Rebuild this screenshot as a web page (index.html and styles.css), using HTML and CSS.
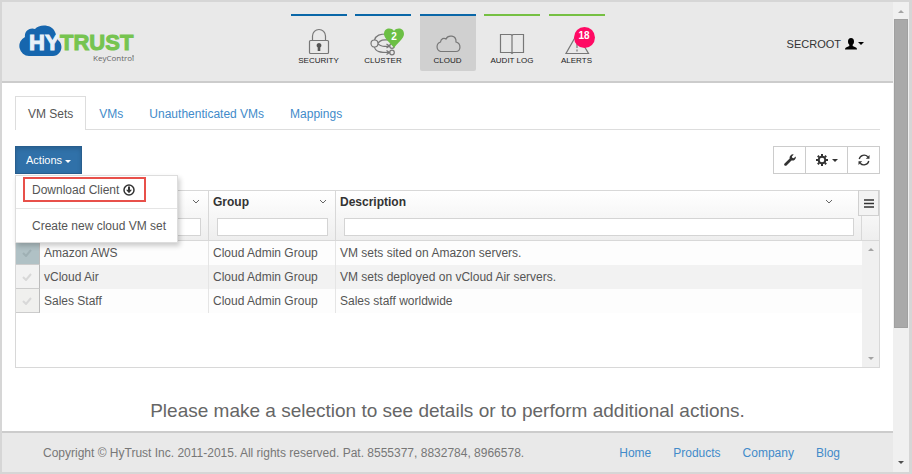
FILE: index.html
```html
<!DOCTYPE html>
<html lang="en">
<head>
    <meta charset="UTF-8">
    <meta name="viewport" content="width=device-width, initial-scale=1.0">
    <title>HyTrust KeyControl</title>
    <link rel="stylesheet" href="styles.css">
</head>
<body>
    <div class="window">
        <div class="page">
            <header class="header">
                <a href="#" class="logo" aria-label="HyTrust KeyControl">
                    <svg width="120" height="42" viewBox="0 0 120 42">
                        <path d="M10 32a10 10 0 0 1-4-19C5 7 11 3 16 5C20 0 33 0 36 8C38 12 37 14 40 17C45 22 42 32 34 32Z" fill="#1666ae"/>
                        <text class="logo-hy" x="10" y="26">HY</text>
                        <text class="logo-trust" x="41" y="26">TRUST</text>
                        <text class="logo-sub" x="74" y="37">KeyControl</text>
                        <circle cx="114" cy="32" r="1" fill="#999"/>
                    </svg>
                </a>

                <nav class="main-nav">
                    <a href="#" class="nav-item">
                        <svg class="nav-icon" width="32" height="28" viewBox="0 0 32 28">
                            <rect x="6.500" y="12.500" width="19" height="13" rx="1"/>
                            <path d="M9.500 12V8a6.500 6.500 0 0 1 13 0v4"/>
                            <path class="solid" d="M16 15a2.500 2.500 0 0 1 1.300 4.600V23h-2.600v-3.400A2.500 2.500 0 0 1 16 15z"/>
                        </svg>
                        <span>SECURITY</span>
                    </a>
                    <a href="#" class="nav-item">
                        <svg class="nav-icon" width="32" height="28" viewBox="0 0 32 28">
                            <circle cx="7.500" cy="15.500" r="3.500"/>
                            <circle cx="25" cy="18" r="2.300"/>
                            <circle cx="25" cy="24.500" r="2.300"/>
                            <path d="M7.500 12C9 7 13 6 20 6M11 15C15 11 17 12 22 12M11 16c4 3 6 2.500 11 2M7.500 19c1 5 6 5.500 14.500 5.500M19.500 16l3 2-3 2M19.500 22.500l3 2-3 2"/>
                        </svg>
                        <span>CLUSTER</span>
                        <svg class="badge badge-heart" width="22" height="20" viewBox="0 0 22 20">
                            <path d="M11 20C8 15 1 11 1 6C1 0 8-1 11 3C14-1 21 0 21 6C21 11 14 15 11 20Z" fill="#6cbf45"/>
                            <text x="11" y="12" text-anchor="middle">2</text>
                        </svg>
                    </a>
                    <a href="#" class="nav-item active">
                        <svg class="nav-icon" width="32" height="28" viewBox="0 0 32 28">
                            <path d="M8.500 23.500A5 5 0 0 1 8.500 14C9 10.500 12 9.500 14 11C16 6.500 24.500 7 24 14C29.500 15.500 29 23.500 24 23.500Z"/>
                        </svg>
                        <span>CLOUD</span>
                    </a>
                    <a href="#" class="nav-item green">
                        <svg class="nav-icon" width="32" height="28" viewBox="0 0 32 28">
                            <path d="M4.500 6.500H15l1 1 1-1h10.500v18H17l-1 1-1-1H4.500zM16 7.500v18"/>
                        </svg>
                        <span>AUDIT LOG</span>
                    </a>
                    <a href="#" class="nav-item green">
                        <svg class="nav-icon" width="32" height="28" viewBox="0 0 32 28">
                            <path d="M16 6L5 25.500h22.500zM16 15v5M16 21.500v2"/>
                        </svg>
                        <span>ALERTS</span>
                        <span class="badge badge-count">18</span>
                    </a>
                </nav>

                <button type="button" class="user-menu">
                    SECROOT
                    <svg width="12" height="12" viewBox="0 0 12 12">
                        <path d="M6 0C8 0 9 1.500 9 3.500C9 5 8.500 6 7.700 6.700V8L11 9.500Q12 10 12 11.500H0Q0 10 1 9.500L4.300 8V6.700C3.500 6 3 5 3 3.500C3 1.500 4 0 6 0Z"/>
                    </svg>
                    <span class="caret"></span>
                </button>
            </header>

            <main class="content">
                <nav class="tabs">
                    <a href="#" class="tab active">VM Sets</a>
                    <a href="#" class="tab">VMs</a>
                    <a href="#" class="tab">Unauthenticated VMs</a>
                    <a href="#" class="tab">Mappings</a>
                </nav>

                <div class="toolbar">
                    <div class="dropdown">
                        <button type="button" class="btn-actions">Actions <span class="caret"></span></button>
                        <div class="dropdown-menu">
                            <a href="#" class="highlight">Download Client
                                <svg width="12" height="12" viewBox="0 0 12 12">
                                    <circle cx="6" cy="6" r="5" fill="none" stroke="#333" stroke-width="1.500"/>
                                    <path d="M5 2.500h2v3.200h2L6 9.200 3 5.700h2z" fill="#333"/>
                                </svg>
                            </a>
                            <a href="#">Create new cloud VM set</a>
                        </div>
                    </div>
                    <div class="btn-group">
                        <button type="button" aria-label="Tools">
                            <svg width="12" height="12" viewBox="0 0 12 12">
                                <path d="M11.800 2.500L9.600 4.200 8.200 3.800 7.900 2.400 9.700.4A3.400 3.400 0 0 0 5.700 4.600L.6 9.500a1.300 1.300 0 0 0 1.900 1.900L7.500 6.400A3.400 3.400 0 0 0 11.800 2.500z" fill="#333"/>
                            </svg>
                        </button>
                        <button type="button" aria-label="Settings">
                            <svg width="12" height="12" viewBox="0 0 12 12">
                                <circle cx="6" cy="6" r="3.300" fill="none" stroke="#333" stroke-width="2"/>
                                <path d="M6 0v2M6 10v2M0 6h2M10 6h2M1.800 1.800l1.400 1.400M8.800 8.800l1.400 1.400M1.800 10.200l1.400-1.400M8.800 3.200l1.400-1.400" stroke="#333" stroke-width="2"/>
                            </svg>
                            <span class="caret"></span>
                        </button>
                        <button type="button" aria-label="Refresh">
                            <svg width="12" height="12" viewBox="0 0 12 12">
                                <path d="M1.200 5A5 5 0 0 1 9.800 2.800M10.800 7A5 5 0 0 1 2.200 9.200" fill="none" stroke="#333" stroke-width="1.300"/>
                                <path d="M11.500 1v3.700H7.800zM.5 11V7.300h3.700z" fill="#333"/>
                            </svg>
                        </button>
                    </div>
                </div>

                <div class="grid">
                    <table class="grid-table">
                        <thead>
                            <tr>
                                <th class="col-check"></th>
                                <th class="col-name">
                                    <div class="th-label">Name <svg class="chevron" width="8" height="6" viewBox="0 0 8 6"><path d="M1 1l3 3 3-3"/></svg></div>
                                    <input type="text" aria-label="Filter by name">
                                </th>
                                <th class="col-group">
                                    <div class="th-label">Group <svg class="chevron" width="8" height="6" viewBox="0 0 8 6"><path d="M1 1l3 3 3-3"/></svg></div>
                                    <input type="text" aria-label="Filter by group">
                                </th>
                                <th class="col-description">
                                    <div class="th-label">Description <svg class="chevron" width="8" height="6" viewBox="0 0 8 6"><path d="M1 1l3 3 3-3"/></svg></div>
                                    <input type="text" aria-label="Filter by description">
                                </th>
                            </tr>
                        </thead>
                        <tbody>
                            <tr>
                                <td class="check current"><svg width="10" height="8" viewBox="0 0 10 8"><path d="M1 4l3 3 5-6"/></svg></td>
                                <td>Amazon AWS</td>
                                <td>Cloud Admin Group</td>
                                <td>VM sets sited on Amazon servers.</td>
                            </tr>
                            <tr>
                                <td class="check"><svg width="10" height="8" viewBox="0 0 10 8"><path d="M1 4l3 3 5-6"/></svg></td>
                                <td>vCloud Air</td>
                                <td>Cloud Admin Group</td>
                                <td>VM sets deployed on vCloud Air servers.</td>
                            </tr>
                            <tr>
                                <td class="check"><svg width="10" height="8" viewBox="0 0 10 8"><path d="M1 4l3 3 5-6"/></svg></td>
                                <td>Sales Staff</td>
                                <td>Cloud Admin Group</td>
                                <td>Sales staff worldwide</td>
                            </tr>
                        </tbody>
                    </table>
                    <div class="grid-side">
                        <div class="grid-corner">
                            <button type="button" class="grid-menu" aria-label="Columns">
                                <svg width="10" height="9" viewBox="0 0 10 9"><path d="M0 1h10M0 4.500h10M0 8h10" stroke="#333" stroke-width="1.500"/></svg>
                            </button>
                        </div>
                        <div class="grid-scroll">
                            <span class="arrow-up"></span>
                            <span class="arrow-down"></span>
                        </div>
                    </div>
                </div>

                <p class="message">Please make a selection to see details or to perform additional actions.</p>
            </main>

            <footer class="footer">
                <span>Copyright © HyTrust Inc. 2011-2015. All rights reserved. Pat. 8555377, 8832784, 8966578.</span>
                <nav class="footer-links">
                    <a href="#">Home</a>
                    <a href="#">Products</a>
                    <a href="#">Company</a>
                    <a href="#">Blog</a>
                </nav>
            </footer>
        </div>

        <div class="scrollbar">
            <span class="arrow-up"></span>
            <div class="thumb"></div>
            <span class="arrow-down dark"></span>
        </div>
    </div>
</body>
</html>
```
FILE: styles.css
```css
* {
    box-sizing: border-box;
}
body {
    margin: 0;
    font-family: "Liberation Sans", Arial, sans-serif;
    font-size: 12px;
    line-height: 16px;
    color: #555;
    background-color: #fff;
}
a {
    color: #428bca;
    text-decoration: none;
}
button {
    font-family: inherit;
    font-size: 11px;
    cursor: pointer;
}
svg {
    display: block;
}
.window {
    display: flex;
    min-height: 100vh;
    border: 2px solid #d6d6d6;
    border-right-width: 3px;
}
.page {
    flex: 1;
    display: flex;
    flex-direction: column;
    min-width: 0;
}

/* header */
.header {
    display: grid;
    grid-template-columns: 1fr 314px 1fr;
    height: 81px;
    background-color: #e9e9e9;
    border-bottom: 2px solid #ccc;
}
.logo {
    padding: 22px 0 0 17px;
}
.logo text {
    font-weight: bold;
    font-size: 22px;
}
.logo .logo-hy {
    fill: #e9f1f8;
    stroke: #e9f1f8;
    stroke-width: 1px;
}
.logo .logo-trust {
    fill: #76c450;
    stroke: #76c450;
    stroke-width: 1px;
}
.logo .logo-sub {
    font-family: "Open Sans", sans-serif;
    font-weight: normal;
    font-size: 8px;
    fill: #666;
}
.main-nav {
    display: flex;
    justify-content: space-between;
    padding-top: 12px;
}
.nav-item {
    position: relative;
    display: flex;
    flex-direction: column;
    align-items: center;
    width: 56px;
    height: 57px;
    padding-top: 12px;
    border-top: 2px solid #0a67a8;
    font-size: 8px;
    line-height: 10px;
    color: #222;
}
.nav-item.green {
    border-top-color: #76c043;
}
.nav-item.active {
    background-color: #d0d0d0;
    border-radius: 0 0 2px 2px;
}
.nav-icon {
    fill: none;
    stroke: #777;
    stroke-width: 1.2;
}
.nav-icon .solid {
    fill: #555;
    stroke: none;
}
.badge {
    position: absolute;
    top: 12px;
    right: 6px;
}
.badge-heart text {
    font-size: 10px;
    font-weight: bold;
    fill: #fff;
}
.badge-count {
    top: 11px;
    right: 10px;
    width: 21px;
    height: 21px;
    border-radius: 50%;
    background-color: #ff0a64;
    color: #fff;
    font-size: 10px;
    font-weight: bold;
    line-height: 18px;
    text-align: center;
}
.user-menu {
    display: flex;
    align-items: center;
    justify-self: end;
    align-self: center;
    gap: 4px;
    padding: 4px 0;
    margin: 4px 29px 0 0;
    border: none;
    background: none;
    color: #333;
}
.caret {
    display: inline-block;
    border: 3px solid transparent;
    border-top-color: currentColor;
    border-bottom: none;
    vertical-align: middle;
}
.user-menu svg {
    fill: #000;
}
.user-menu .caret {
    margin-left: -3px;
    color: #000;
}

/* content */
.content {
    padding: 13px 13px 0;
}
.tabs {
    display: flex;
    border-bottom: 1px solid #ddd;
}
.tab {
    padding: 9px 12px 8px;
    margin-bottom: -1px;
    border: 1px solid transparent;
    border-bottom: none;
}
.tab.active {
    background-color: #fff;
    border-color: #ddd;
    color: #555;
}
.toolbar {
    display: flex;
    justify-content: space-between;
    margin: 16px 0;
}
.dropdown {
    position: relative;
}
.btn-actions {
    height: 28px;
    padding: 0 10px;
    border: 1px solid #285e8e;
    background-color: #3071a9;
    box-shadow: inset 0 2px 4px rgba(0,0,0,0.15);
    color: #fff;
}
.dropdown-menu {
    position: absolute;
    top: 29px;
    left: 0;
    z-index: 10;
    width: 163px;
    border: 1px solid #ddd;
    background-color: #fff;
    box-shadow: 2px 3px 5px rgba(0,0,0,0.2);
}
.dropdown-menu a {
    display: flex;
    align-items: center;
    gap: 4px;
    height: 34px;
    padding-left: 16px;
    color: #555;
    white-space: nowrap;
}
.dropdown-menu .highlight {
    width: 123px;
    height: 25px;
    margin: 1px 0 0 7px;
    padding-left: 7px;
    border: 2px solid #e8504a;
}
.dropdown-menu .highlight + a {
    margin-top: 6px;
    border-top: 1px solid #e5e5e5;
}
.btn-group {
    display: flex;
}
.btn-group button {
    display: flex;
    align-items: center;
    justify-content: center;
    gap: 4px;
    width: 33px;
    height: 28px;
    padding: 0;
    border: 1px solid #ccc;
    background-color: #fff;
    color: #333;
}
.btn-group button + button {
    margin-left: -1px;
}
.btn-group button:nth-child(2) {
    width: 43px;
}

/* grid */
.grid {
    display: flex;
    height: 178px;
    border: 1px solid #d8d8d8;
}
.grid-table {
    flex: 1;
    align-self: flex-start;
    table-layout: fixed;
    border-spacing: 0;
    width: 100%;
}
.grid-table th {
    height: 50px;
    padding: 0 4px;
    border-right: 1px solid #d8d8d8;
    border-bottom: 1px solid #d8d8d8;
    background: linear-gradient(#fff, #eee);
    text-align: left;
    vertical-align: top;
    color: #333;
}
.grid-table .col-check {
    width: 24px;
}
.col-name {
    width: 169px;
}
.col-group {
    width: 127px;
}
.th-label {
    display: flex;
    align-items: center;
    justify-content: space-between;
    height: 22px;
    padding-right: 4px;
    margin-bottom: 5px;
}
.col-description .th-label {
    padding-right: 24px;
}
.chevron {
    fill: none;
    stroke: #666;
}
.grid-table input {
    display: block;
    width: calc(100% - 7px);
    height: 18px;
    margin-left: 4px;
    padding: 0 4px;
    border: 1px solid #d4d4d4;
    background-color: #fff;
}
.grid-table td {
    height: 24px;
    padding: 0 4px;
    border-right: 1px solid #e5e5e5;
    background-color: #fdfdfd;
}
.grid-table td:last-child {
    border-right: none;
}
.grid-table tr:nth-child(2) td {
    background-color: #f2f2f2;
}
.grid-table td.check {
    padding: 0 6px;
    border-right: 1px solid #bbb;
    border-bottom: 1px solid #ccc;
    background-color: #f0f0ee;
}
.grid-table td.current {
    background-color: #b0c1c5;
}
.check svg {
    fill: none;
    stroke: #d8d8d8;
    stroke-width: 2;
}
.current svg {
    stroke: #9fb0b4;
}
.grid-side {
    display: flex;
    flex-direction: column;
    width: 17px;
}
.grid-corner {
    position: relative;
    height: 50px;
    border-bottom: 1px solid #d8d8d8;
    background: linear-gradient(#fff, #eee);
}
.grid-menu {
    position: absolute;
    top: -1px;
    right: 0;
    display: flex;
    align-items: center;
    justify-content: center;
    width: 21px;
    height: 26px;
    padding: 0;
    border: 1px solid #d0d0d0;
    background-color: #f3f3f3;
}
.grid-scroll {
    flex: 1;
    display: flex;
    flex-direction: column;
    align-items: center;
    justify-content: space-between;
    padding: 7px 0;
    background-color: #f0f0f0;
}
.arrow-up,
.arrow-down {
    border: 3px solid transparent;
}
.arrow-up {
    border-bottom-color: #a3a3a3;
    border-top: none;
}
.arrow-down {
    border-top-color: #a3a3a3;
    border-bottom: none;
}
.arrow-down.dark {
    border-top-color: #505050;
}
.message {
    margin: 30px 0 6px;
    font-size: 19px;
    line-height: 26px;
    text-align: center;
    color: #666;
}

/* footer */
.footer {
    display: flex;
    align-items: center;
    justify-content: space-between;
    height: 41px;
    margin-top: auto;
    padding: 0 53px 0 41px;
    border-top: 2px solid #ccc;
    background-color: #e9e9e9;
    color: #777;
}
.footer-links {
    display: flex;
    gap: 22px;
}

/* window scrollbar */
.scrollbar {
    display: flex;
    flex-direction: column;
    align-items: center;
    width: 16px;
    padding: 8px 1px;
    background-color: #f0f0f0;
}
.thumb {
    width: 100%;
    height: 309px;
    margin-top: 6px;
    background-color: #a9a9a9;
    border: 1px solid #a0a0a0;
}
.scrollbar .dark {
    margin-top: auto;
}
```
